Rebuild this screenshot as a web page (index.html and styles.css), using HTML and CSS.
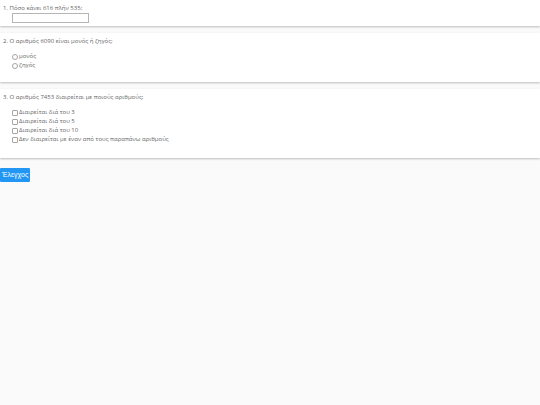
FILE: index.html
```
<!DOCTYPE html>
<html lang="el">
<head>
    <meta charset="UTF-8">
    <meta name="viewport" content="width=device-width, initial-scale=1.0">
    <title>Quiz</title>
    <link rel="stylesheet" href="styles.css">
</head>
<body>
    <form>
        <section class="question">
            <label class="title" for="answer1">1. Πόσο κάνει 616 πλήν 535;</label>
            <input type="text" id="answer1" class="answer">
        </section>

        <section class="question">
            <p class="title">2. Ο αριθμός 6090 είναι μονός ή ζηγός;</p>
            <div class="options">
                <label><input type="radio" name="parity" value="odd">μονός</label>
                <label><input type="radio" name="parity" value="even">ζηγός</label>
            </div>
        </section>

        <section class="question">
            <p class="title">3. Ο αριθμός 7453 διαιρείται με ποιούς αριθμούς;</p>
            <div class="options multiple">
                <label><input type="checkbox" name="div" value="3">Διαιρείται διά του 3</label>
                <label><input type="checkbox" name="div" value="5">Διαιρείται διά του 5</label>
                <label><input type="checkbox" name="div" value="10">Διαιρείται διά του 10</label>
                <label><input type="checkbox" name="div" value="none">Δεν διαιρείται με έναν από τους παραπάνω αριθμούς</label>
            </div>
        </section>

        <button type="button" class="check">Έλεγχος</button>
    </form>
</body>
</html>
```
FILE: styles.css
```
* {
    box-sizing: border-box;
}
body {
    margin: 0;
    background-color: #fafafa;
    color: #666;
    font-family: "Open Sans", "Liberation Sans", Arial, sans-serif;
    font-size: 6px;
    line-height: 9px;
}
.question {
    margin-bottom: 7px;
    padding: 4px 3px 3px;
    background-color: #fff;
    box-shadow: 0 1px 2px rgba(0, 0, 0, 0.25);
}
.title {
    display: block;
    margin: 0;
}
.answer {
    display: block;
    width: 77px;
    height: 10px;
    margin-left: 9px;
    padding: 1px;
    border: 1px solid #b5b5b5;
    background-color: #fff;
    font: inherit;
}
.options {
    padding: 6px 9px 9px;
}
.options.multiple {
    padding-bottom: 11px;
}
.options label {
    display: flex;
    align-items: center;
    gap: 1px;
    min-height: 9px;
}
.options input {
    appearance: none;
    width: 6px;
    height: 6px;
    margin: 0;
    border: 1px solid #a5a5a5;
    border-radius: 1px;
    background-color: #fff;
}
.options input[type="radio"] {
    border-radius: 50%;
}
.options input:checked {
    background-color: #2196f3;
}
.check {
    display: block;
    margin-top: 10px;
    padding: 2px;
    border: none;
    border-radius: 1px;
    background-color: #2196f3;
    color: #fff;
    font-family: "Liberation Sans", Arial, sans-serif;
    font-size: 7px;
    line-height: 10px;
    cursor: pointer;
}
```
